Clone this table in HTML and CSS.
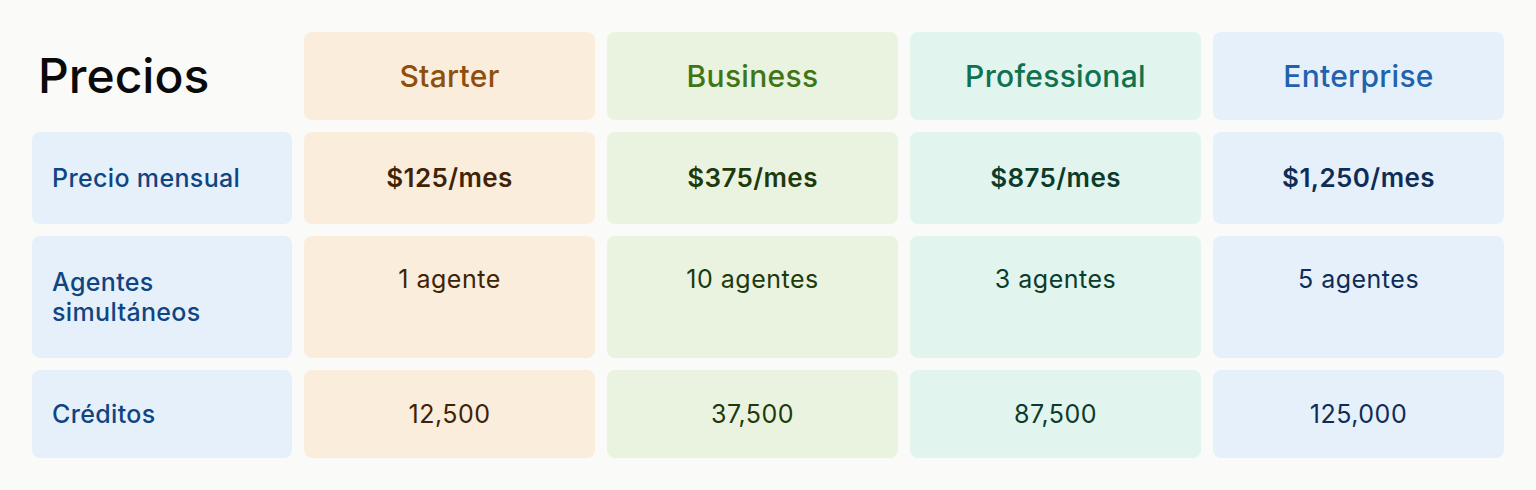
FILE: index.html
```html
<!DOCTYPE html>
<html lang="es">
<head>
<meta charset="utf-8">
<title>Precios</title>
<link rel="stylesheet" href="styles.css">
</head>
<body>
<main class="page">
  <div class="pricing">
    <div class="cell title"><h1>Precios</h1></div>
    <div class="cell head starter">Starter</div>
    <div class="cell head business">Business</div>
    <div class="cell head professional">Professional</div>
    <div class="cell head enterprise">Enterprise</div>

    <div class="cell label">Precio mensual</div>
    <div class="cell value price starter">$125/mes</div>
    <div class="cell value price business">$375/mes</div>
    <div class="cell value price professional">$875/mes</div>
    <div class="cell value price enterprise">$1,250/mes</div>

    <div class="cell label">Agentes<br>simultáneos</div>
    <div class="cell value top starter">1 agente</div>
    <div class="cell value top business">10 agentes</div>
    <div class="cell value top professional">3 agentes</div>
    <div class="cell value top enterprise">5 agentes</div>

    <div class="cell label">Créditos</div>
    <div class="cell value starter">12,500</div>
    <div class="cell value business">37,500</div>
    <div class="cell value professional">87,500</div>
    <div class="cell value enterprise">125,000</div>
  </div>
</main>
</body>
</html>
```
FILE: styles.css
```css
* { box-sizing: border-box; }

html, body {
  margin: 0;
  padding: 0;
  background: #fafaf9;
  font-family: "Inter", "Noto Sans", sans-serif;
}

.page {
  padding: 32px;
}

.pricing {
  display: grid;
  grid-template-columns: 260px repeat(4, 1fr);
  grid-template-rows: 88px 92px 122px 88px;
  gap: 12px;
}

.cell {
  border-radius: 8px;
  display: flex;
  align-items: center;
  padding: 0 20px;
  font-size: 25px;
  line-height: 30px;
  letter-spacing: 0.35px;
}

.title {
  padding: 0 6px;
}

.title h1 {
  margin: 0;
  font-size: 48px;
  font-weight: 500;
  line-height: 1.1;
  color: #0a0a0a;
  letter-spacing: 0;
}

.head {
  justify-content: center;
  font-size: 30px;
  font-weight: 500;
  letter-spacing: 0.3px;
}

.label {
  background: #e6f0fb;
  color: #0f4582;
  font-weight: 500;
}

.value {
  justify-content: center;
  text-align: center;
  font-weight: 400;
  letter-spacing: 0.5px;
}

.value.price {
  font-size: 26px;
  font-weight: 600;
  letter-spacing: 0.4px;
}

.value.top {
  align-items: flex-start;
  padding-top: 28px;
}

.starter { background: #fbeddc; }
.business { background: #eaf3e0; }
.professional { background: #e1f4ee; }
.enterprise { background: #e6f0fb; }

.head.starter { color: #8f4f0c; }
.head.business { color: #3f7613; }
.head.professional { color: #10714f; }
.head.enterprise { color: #1f63ac; }

.value.starter { color: #3f2306; }
.value.business { color: #1e3a0c; }
.value.professional { color: #0b3b2b; }
.value.enterprise { color: #0e2d56; }
```
